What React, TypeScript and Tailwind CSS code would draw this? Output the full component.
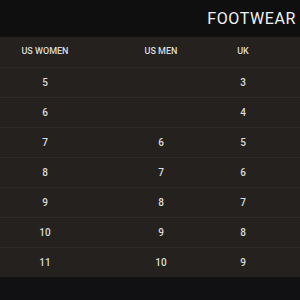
const rows: [string, string, string][] = [
  ["5", "", "3"],
  ["6", "", "4"],
  ["7", "6", "5"],
  ["8", "7", "6"],
  ["9", "8", "7"],
  ["10", "9", "8"],
  ["11", "10", "9"],
];

export default function App() {
  return (
    <div className="flex h-[300px] w-[300px] flex-col overflow-hidden bg-[#111114] font-['Roboto',sans-serif]">
      <div className="flex h-[37px] items-center justify-end bg-[#0f0f0f] pr-[4px]">
        <span className="text-[16px] font-normal leading-none tracking-[0.6px] text-[#f2f2f2]">
          FOOTWEAR
        </span>
      </div>
      <div className="bg-[#24211e] text-[#dcdcdc]">
        <div className="grid h-[30px] grid-cols-[90px_142px_22px] items-center text-center text-[9px] font-medium">
          <span>US WOMEN</span>
          <span>US MEN</span>
          <span>UK</span>
        </div>
        {rows.map((r, i) => (
          <div
            key={i}
            className="grid h-[30px] grid-cols-[90px_142px_22px] items-center border-t border-[#2d2a27] text-center text-[10px] font-medium"
          >
            <span>{r[0]}</span>
            <span>{r[1]}</span>
            <span>{r[2]}</span>
          </div>
        ))}
      </div>
    </div>
  );
}
